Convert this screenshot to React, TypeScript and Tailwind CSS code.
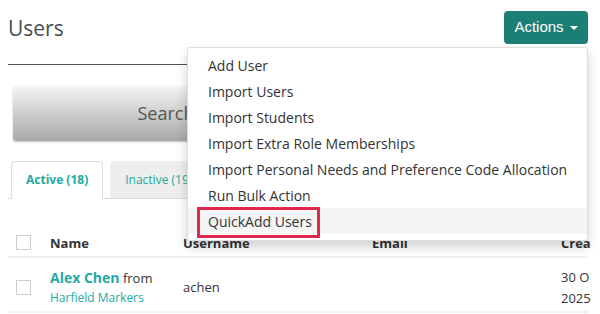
export default function App() {
  const items = [
    "Add User",
    "Import Users",
    "Import Students",
    "Import Extra Role Memberships",
    "Import Personal Needs and Preference Code Allocation",
    "Run Bulk Action",
    "QuickAdd Users",
  ];

  return (
    <div className="relative w-[600px] h-[314px] overflow-hidden bg-white font-['Open_Sans',sans-serif] text-[#333]">
      <div className="w-[580px] ml-2">
        {/* header */}
        <div className="flex items-start justify-between h-[65px] border-b border-[#555]">
          <h1 className="mt-[14px] text-[21px] leading-[28px] text-[#474d55]">Users</h1>
          <button className="mt-[11px] h-[33px] w-[84px] rounded-[4px] bg-[#1b7f75] text-white text-[15px] font-['Liberation_Sans',sans-serif] flex items-center justify-center gap-[6px]">
            Actions
            <span className="w-0 h-0 border-l-[4px] border-r-[4px] border-t-[4px] border-l-transparent border-r-transparent border-t-white"></span>
          </button>
        </div>

        {/* search */}
        <div className="mt-[21px] ml-[5px] w-[306px] h-[55px] rounded-[3px] bg-gradient-to-b from-[#f4f4f4] to-[#a9a9a9] shadow-[0_1px_2px_rgba(0,0,0,0.25)] flex items-center justify-center text-[18px] text-[#555]">
          Search
        </div>

        {/* tabs */}
        <div className="mt-[21px] flex items-end h-[37px] border-b border-[#ddd] pl-[3px] gap-[7px]">
          <div className="h-[38px] -mb-px px-[14px] flex items-center bg-white border border-[#ddd] border-b-white rounded-t-[4px] text-[12px] font-bold text-[#22aba3]">
            Active (18)
          </div>
          <div className="h-[37px] px-[14px] flex items-center bg-[#eee] border border-[#eee] rounded-t-[4px] text-[12px] text-[#22aba3]">
            Inactive (19)
          </div>
        </div>

        {/* table */}
        <div className="mt-[33px] text-[13px]">
          <div className="flex items-center h-[26px] border-b-2 border-[#f0f0f0]">
            <div className="w-[42px] pl-[8px] -mt-[4px]">
              <div className="w-[15px] h-[15px] border border-[#ccc] bg-white"></div>
            </div>
            <div className="w-[133px] font-bold text-[#333]">Name</div>
            <div className="w-[189px] font-bold text-[#333]">Username</div>
            <div className="w-[189px] font-bold text-[#333]">Email</div>
            <div className="font-bold text-[#333] whitespace-nowrap w-[27px]">Crea</div>
          </div>
          <div className="flex items-center h-[55px] pt-[6px] border-b-2 border-[#f0f0f0]">
            <div className="w-[42px] pl-[8px]">
              <div className="w-[15px] h-[15px] border border-[#ccc] bg-white"></div>
            </div>
            <div className="w-[133px] leading-[20px]">
              <div>
                <span className="text-[14px] font-bold text-[#22aba3]">Alex Chen</span>
                <span className="text-[#333]"> from</span>
              </div>
              <div className="text-[12px] text-[#22aba3]">Harfield Markers</div>
            </div>
            <div className="w-[189px] text-[#333]">achen</div>
            <div className="w-[189px]"></div>
            <div className="leading-[21px] text-[#333] whitespace-nowrap w-[27px]">
              <div>30 O</div>
              <div>2025</div>
            </div>
          </div>
        </div>
      </div>

      {/* dropdown */}
      <div className="absolute left-[187px] top-[47px] w-[401px] pt-[4px] pb-[6px] bg-white border border-[#ddd] rounded-[3px] shadow-[0_6px_12px_rgba(0,0,0,0.18)]">
        {items.map((label) => (
          <div
            key={label}
            className={
              label === "QuickAdd Users"
                ? "h-[26px] px-[20px] flex items-center text-[14px] text-[#333] bg-[#f5f5f5] whitespace-nowrap"
                : "h-[26px] px-[20px] flex items-center text-[14px] text-[#333] whitespace-nowrap"
            }
          >
            {label}
          </div>
        ))}
      </div>

      {/* highlight box */}
      <div className="absolute left-[197px] top-[207px] w-[123px] h-[31px] border-[3px] border-[#e0294d] pointer-events-none"></div>
    </div>
  );
}
